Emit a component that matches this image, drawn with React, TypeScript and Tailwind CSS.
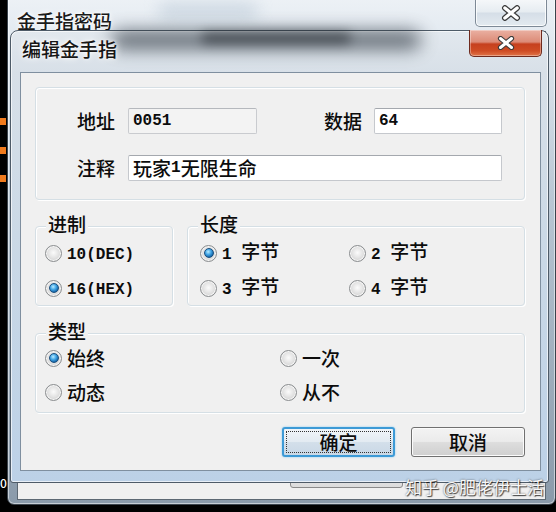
import React from "react";

const ASCII_RUN = /^[\x20-\x7e]+$/;

// Renders CJK text at full size and Latin/digit runs as half-width monospace.
function Mixed({ text, mono = "text-[16px]" }: { text: string; mono?: string }) {
  const runs = text.match(/[\x20-\x7e]+|[^\x20-\x7e]+/g) ?? [];
  return (
    <>
      {runs.map((r, i) =>
        ASCII_RUN.test(r) ? (
          <span key={i} className={`font-['Liberation_Mono',monospace] font-semibold whitespace-pre ${mono}`}>
            {r}
          </span>
        ) : (
          <span key={i}>{r}</span>
        )
      )}
    </>
  );
}

function CloseGlyph({ w, h }: { w: number; h: number }) {
  return (
    <svg width={w} height={h} viewBox="0 0 18 14">
      <path d="M3.5 2.5 L14.5 11.5 M14.5 2.5 L3.5 11.5" stroke="#3b3b3b" strokeWidth="5.2" strokeLinecap="round" />
      <path d="M3.5 2.5 L14.5 11.5 M14.5 2.5 L3.5 11.5" stroke="#ffffff" strokeWidth="3" strokeLinecap="round" />
    </svg>
  );
}

function Radio({ on = false }: { on?: boolean }) {
  return (
    <span className="inline-flex shrink-0 w-[17px] h-[17px] rounded-full border border-[#8a8d8f] bg-[radial-gradient(circle_at_50%_45%,#fbfbfb_0%,#e4e4e4_45%,#c4c4c4_100%)] shadow-[inset_0_0_0_1px_#f6f6f6] items-center justify-center">
      {on && (
        <span className="w-[10px] h-[10px] rounded-full border border-[#1b4f7e] bg-[radial-gradient(circle_at_40%_35%,#b9ecff_0%,#43a6e6_40%,#1566a8_75%,#0d477c_100%)]" />
      )}
    </span>
  );
}

function Option({ on, label }: { on?: boolean; label: string }) {
  return (
    <div className="flex items-center h-[24px] gap-[5px]">
      <Radio on={on} />
      <span className="text-[19px] leading-[24px] text-[#0c0c0c]">
        <Mixed text={label} />
      </span>
    </div>
  );
}

function Group({
  title,
  className = "",
  children,
}: {
  title?: string;
  className?: string;
  children: React.ReactNode;
}) {
  return (
    <div
      className={`relative border border-[#d5dfe5] rounded-[4px] shadow-[inset_1px_1px_0_#ffffff,1px_1px_0_#ffffff] ${className}`}
    >
      {title && (
        <span className="absolute left-[10px] top-[-14px] px-[2px] bg-[#f0f0f0] text-[19px] leading-[22px] text-[#0c0c0c]">
          {title}
        </span>
      )}
      {children}
    </div>
  );
}

function Field({
  value,
  disabled = false,
  className = "",
}: {
  value: string;
  disabled?: boolean;
  className?: string;
}) {
  return (
    <div
      className={`h-[26px] flex items-center pl-[4px] rounded-[2px] border ${
        disabled
          ? "bg-[#f3f3f3] border-[#c9cbcf] border-t-[#b5b8bd]"
          : "bg-white border-[#c5c8cd] border-t-[#a4a8ae]"
      } text-[19px] leading-[24px] text-[#0c0c0c] ${className}`}
    >
      <Mixed text={value} mono="text-[16px]" />
    </div>
  );
}

export default function App() {
  return (
    <div className="relative w-[556px] h-[512px] overflow-hidden bg-black font-['Noto_Sans_CJK_SC',sans-serif] font-medium">
      {/* desktop bits behind the windows */}
      <div className="absolute left-0 top-[118px] w-[6px] h-[7px] bg-[#f07a1c]" />
      <div className="absolute left-0 top-[147px] w-[6px] h-[7px] bg-[#f07a1c]" />
      <div className="absolute left-0 top-[175px] w-[6px] h-[7px] bg-[#f07a1c]" />
      <div className="absolute left-0 top-[475px] text-[12px] leading-[16px] text-white">0</div>

      {/* back window: 金手指密码 */}
      <div className="absolute left-[7px] top-[-8px] w-[549px] h-[513px] flex flex-col rounded-[7px] border border-[#3a434c] bg-[linear-gradient(to_bottom,#eef2f6_0%,#e3eaf1_8%,#b9c7d4_40%,#8a9aaa_100%)] shadow-[inset_0_0_0_1px_rgba(255,255,255,0.5)]">
        <div className="relative h-[38px] flex items-start shrink-0">
          <div className="absolute left-[150px] top-[12px] w-[100px] h-[12px] rounded-full bg-[#b4c4d3] blur-[8px] opacity-70" />
          <span className="relative pl-[9px] pt-[16px] text-[19px] leading-[24px] text-[#1a1a1a] [text-shadow:0_0_6px_#ffffff,0_0_3px_#ffffff]">
            金手指密码
          </span>
          <div className="relative ml-auto mr-[8px] mt-[6px] w-[72px] h-[28px] flex items-center justify-center rounded-b-[5px] border border-[#7d8996] border-t-0 bg-[linear-gradient(to_bottom,#f6f8fa_0%,#e6ecf1_48%,#d5dee7_52%,#e3eaf0_100%)] shadow-[inset_0_0_0_1px_rgba(255,255,255,0.8)]">
            <CloseGlyph w={20} h={16} />
          </div>
        </div>
        <div className="flex-1 mx-[9px] mb-[4px] border border-[#5c6873] bg-[#f0f0f0] flex flex-col justify-end pb-[11px] pl-[272px]">
          <div className="w-[113px] h-[28px] rounded-[3px] border border-[#8a8a8a] bg-[linear-gradient(to_bottom,#f2f2f2,#dcdcdc)]" />
        </div>
      </div>

      {/* front dialog: 编辑金手指 */}
      <div className="absolute left-[10px] top-[30px] w-[539px] h-[453px] flex flex-col rounded-t-[8px] rounded-b-[3px] border border-[#4e5b68] bg-[linear-gradient(to_bottom,#e2e8ee_0%,#d8e0e8_9%,#cbd9e6_45%,#bcd1e7_100%)] shadow-[inset_0_0_0_1px_rgba(255,255,255,0.65)]">
        {/* caption */}
        <div className="relative h-[41px] shrink-0 flex items-start">
          <div className="absolute left-[100px] top-[0px] w-[310px] h-[18px] rounded-full bg-[#2a333d] blur-[9px] opacity-70" />
          <div className="absolute left-[190px] top-[2px] w-[150px] h-[10px] rounded-full bg-[#151a20] blur-[6px] opacity-60" />
          <span className="relative pl-[11px] pt-[6px] text-[19px] leading-[24px] text-[#161616] [text-shadow:0_0_7px_#ffffff,0_0_3px_#ffffff]">
            编辑金手指
          </span>
          <div className="relative ml-auto mr-[6px] -mt-[1px] w-[73px] h-[27px] flex items-center justify-center rounded-b-[5px] border border-[#6e2a1e] border-t-0 bg-[linear-gradient(to_bottom,#eab0a2_0%,#dc8b77_46%,#c6401e_54%,#cf4c24_80%,#e07448_100%)] shadow-[inset_0_0_0_1px_rgba(255,255,255,0.35)]">
            <CloseGlyph w={18} h={14} />
          </div>
        </div>

        {/* client area */}
        <div className="h-[399px] ml-[9px] mr-[7px] border border-[#7f8f9f] bg-[#f0f0f0] pt-[14px] pl-[14px] pr-[15px] flex flex-col text-[#0c0c0c]">
          <Group className="h-[113px] shrink-0">
            <div className="pt-[20px] pl-[41px] pr-[22px] flex flex-col gap-[21px]">
              <div className="flex items-center h-[26px]">
                <span className="w-[38px] text-[19px] leading-[24px]">地址</span>
                <Field value="0051" disabled className="ml-[13px] w-[129px]" />
                <span className="ml-auto text-[19px] leading-[24px]">数据</span>
                <Field value="64" className="ml-[12px] w-[128px]" />
              </div>
              <div className="flex items-center h-[26px]">
                <span className="w-[38px] text-[19px] leading-[24px]">注释</span>
                <Field value="玩家1无限生命" className="ml-[13px] w-[374px]" />
              </div>
            </div>
          </Group>

          <div className="mt-[26px] h-[80px] shrink-0 flex gap-[14px]">
            <Group title="进制" className="w-[138px]">
              <div className="pt-[14px] pl-[9px] flex flex-col gap-[11px]">
                <Option label="10(DEC)" />
                <Option label="16(HEX)" on />
              </div>
            </Group>
            <Group title="长度" className="flex-1">
              <div className="pt-[14px] pl-[12px] grid grid-cols-[149px_1fr] gap-y-[11px]">
                <Option label="1 字节" on />
                <Option label="2 字节" />
                <Option label="3 字节" />
                <Option label="4 字节" />
              </div>
            </Group>
          </div>

          <Group title="类型" className="mt-[27px] h-[80px] shrink-0">
            <div className="pt-[12px] pl-[9px] grid grid-cols-[235px_1fr] gap-y-[10px]">
              <Option label="始终" on />
              <Option label="一次" />
              <Option label="动态" />
              <Option label="从不" />
            </div>
          </Group>

          <div className="mt-[14px] flex justify-end gap-[16px]">
            <div className="relative w-[113px] h-[30px] rounded-[3px] border-2 border-[#3d9ad6] bg-[linear-gradient(to_bottom,#f1f5f9_0%,#e3ebf2_48%,#d3dfea_52%,#c9d8e6_100%)] shadow-[0_0_2px_#7cc4ef] flex items-center justify-center">
              <div className="absolute inset-[2px] border border-dotted border-[#333]" />
              <span className="relative text-[19px] leading-[24px]">确定</span>
            </div>
            <div className="w-[114px] h-[30px] rounded-[3px] border border-[#707070] bg-[linear-gradient(to_bottom,#f3f3f3_0%,#ebebeb_48%,#dddddd_52%,#cfcfcf_100%)] shadow-[inset_0_0_0_1px_#fbfbfb] flex items-center justify-center">
              <span className="text-[19px] leading-[24px]">取消</span>
            </div>
          </div>
        </div>
      </div>

      {/* watermark */}
      <div className="absolute left-[405px] top-[476px] text-[17px] leading-[22px] font-normal text-[#f7f7f7] [text-shadow:1px_1px_1px_rgba(0,0,0,0.7),0_0_2px_rgba(0,0,0,0.6)]">
        知乎 @肥佬伊士活
      </div>
    </div>
  );
}
